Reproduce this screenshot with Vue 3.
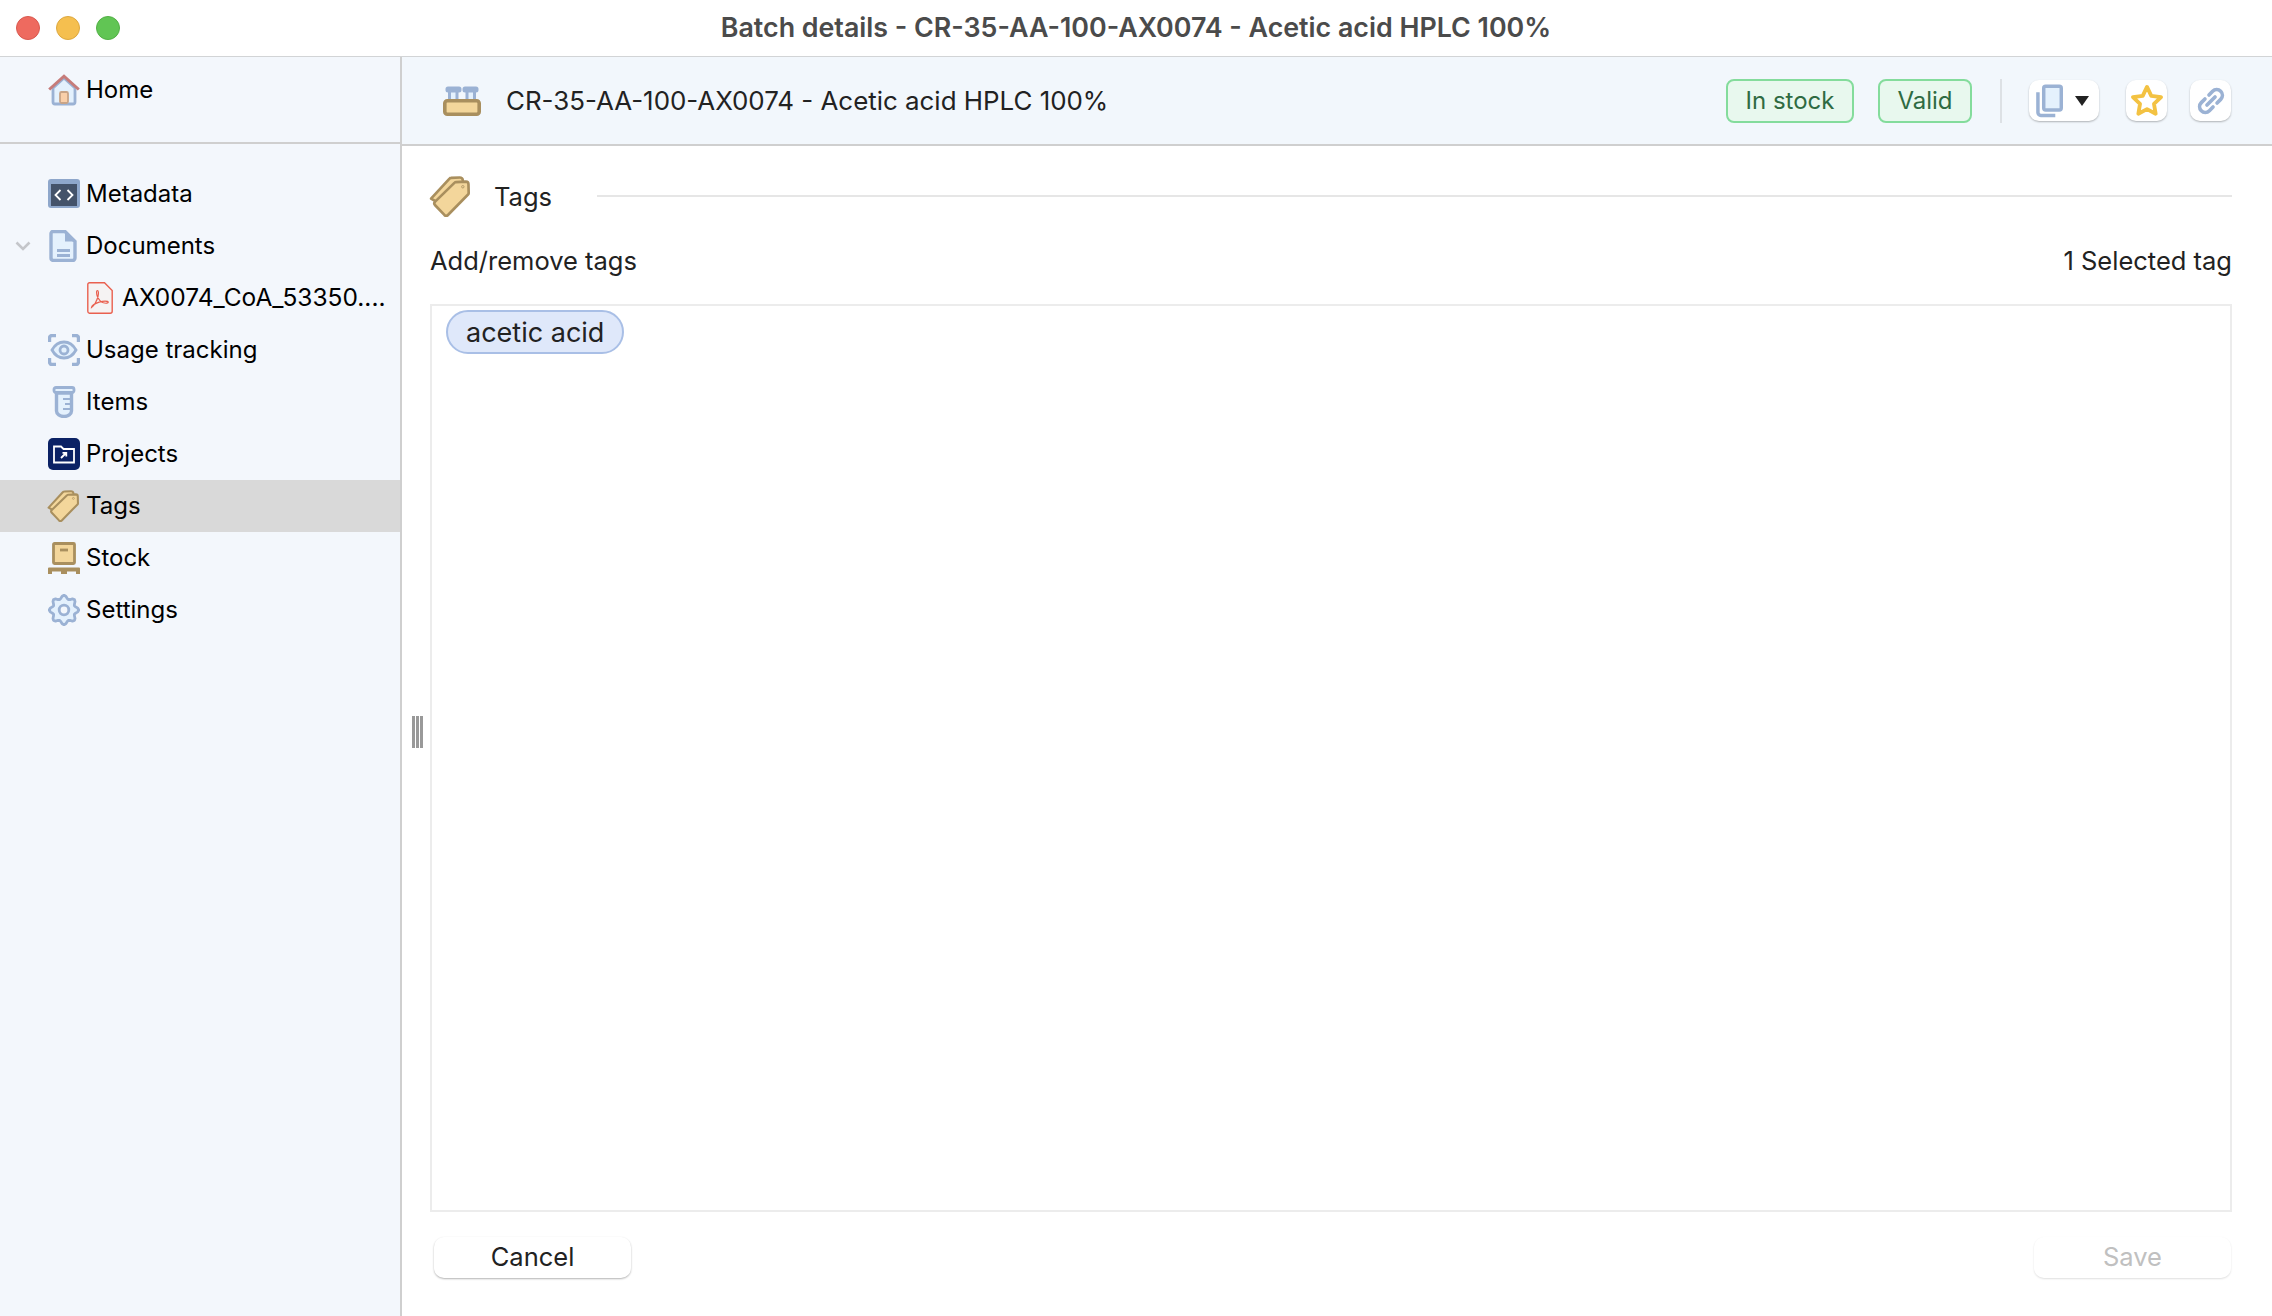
<script setup>
const navItems = [
  { id: 'metadata', label: 'Metadata' },
  { id: 'documents', label: 'Documents', expanded: true },
  { id: 'pdf', label: 'AX0074_CoA_53350....', child: true },
  { id: 'usage', label: 'Usage tracking' },
  { id: 'items', label: 'Items' },
  { id: 'projects', label: 'Projects' },
  { id: 'tags', label: 'Tags', active: true },
  { id: 'stock', label: 'Stock' },
  { id: 'settings', label: 'Settings' }
]

const selectedTags = ['acetic acid']

// gear outline with 8 teeth, the curves get smoothed by the round stroke join
const gearPath = (() => {
  const pts = []
  for (let i = 0; i < 48; i++) {
    const a = (i / 48) * Math.PI * 2
    const r = 13 + 1.8 * Math.cos(a * 8)
    pts.push(`${(16 + r * Math.sin(a)).toFixed(2)} ${(16 - r * Math.cos(a)).toFixed(2)}`)
  }
  return 'M' + pts.join('L') + 'Z'
})()
</script>

<template>
  <div class="window">
    <header class="titlebar">
      <div class="lights">
        <span class="light red"></span>
        <span class="light yellow"></span>
        <span class="light green"></span>
      </div>
      <h1>Batch details - CR-35-AA-100-AX0074 - Acetic acid HPLC 100%</h1>
    </header>

    <div class="body">
      <aside class="sidebar">
        <div class="side-top">
          <div class="row">
            <svg class="icon" viewBox="0 0 32 32">
              <path d="M5 14v14a2 2 0 0 0 2 2h18a2 2 0 0 0 2-2V14L16 4z" fill="#e4f1fd" stroke="#9bb2d4" stroke-width="2.800" />
              <rect x="12" y="18" width="8" height="11" rx="1.500" fill="#f9cfa9" stroke="#c8a487" stroke-width="1.800" />
              <path d="M1.200 15.500 16 2.200l14.800 13.300" fill="none" stroke="#c67c7a" stroke-width="3" />
            </svg>
            <span>Home</span>
          </div>
        </div>

        <nav class="side-list">
          <div v-for="item in navItems" :key="item.id" class="row" :class="{ active: item.active, child: item.child }">
            <svg v-if="item.expanded" class="chevron" viewBox="0 0 16 10">
              <path d="M1.500 1.500 8 8l6.500-6.500" fill="none" stroke="#c4c6ca" stroke-width="2.600" />
            </svg>

            <svg v-if="item.id === 'metadata'" class="icon" viewBox="0 0 32 32">
              <rect y="1" width="32" height="29" rx="3" fill="#8ea7cb" />
              <rect x="3" y="6" width="26" height="22" fill="#44536a" />
              <path d="M12.500 12 7.500 17l5 5M19.500 12l5 5-5 5" fill="none" stroke="#fff" stroke-width="1.800" />
            </svg>
            <svg v-else-if="item.id === 'documents'" class="icon" viewBox="0 0 32 32">
              <path d="M5 1.500h12l10 10V28a2.500 2.500 0 0 1-2.500 2.500h-19.500A2.500 2.500 0 0 1 3 28V3.500a2 2 0 0 1 2-2z" fill="#e4f1fd" stroke="#9bb2d4" stroke-width="3.400" />
              <path d="M17 1.500 27 11.500H17z" fill="#9bb2d4" />
              <path d="M9 20.500h13M9 25.500h13" stroke="#9bb2d4" stroke-width="3" />
            </svg>
            <svg v-else-if="item.id === 'pdf'" class="icon pdf" viewBox="0 0 26 32">
              <path d="M2.500.8h15l7.700 7.700v20.700a2 2 0 0 1-2 2H2.500a2 2 0 0 1-1.700-2V2.500A1.700 1.700 0 0 1 2.500.800z" fill="#f5f3f3" stroke="#e9604f" stroke-width="1.400" />
              <path d="M4.500 25.500c2.500-1.500 5.500-7 6.500-11 .8-3 .5-6-.6-6-1.200 0-1 3.500 0 6 1.500 3.500 3.600 5.500 6 6.300 2.600.8 5 .4 4.800-.7-.2-1.300-5-1.300-9 0-3.500 1.200-7.500 3.500-7.700 5.400z" fill="none" stroke="#e9604f" stroke-width="1.200" />
            </svg>
            <svg v-else-if="item.id === 'usage'" class="icon" viewBox="0 0 32 32">
              <path d="M1.500 8V4a2.500 2.500 0 0 1 2.500-2.500h4M24 1.500h4A2.500 2.500 0 0 1 30.500 4v4M30.500 24v4a2.500 2.500 0 0 1-2.500 2.500h-4M8 30.500H4A2.500 2.500 0 0 1 1.500 28v-4" fill="none" stroke="#9bb2d4" stroke-width="3.400" />
              <path d="M4 16c3-5.500 7-8 12-8s9 2.500 12 8c-3 5.500-7 8-12 8s-9-2.500-12-8z" fill="#e4f1fd" stroke="#9bb2d4" stroke-width="2.800" />
              <circle cx="16" cy="16" r="4" fill="#e4f1fd" stroke="#9bb2d4" stroke-width="2.800" />
            </svg>
            <svg v-else-if="item.id === 'items'" class="icon" viewBox="0 0 32 32">
              <rect x="6" y="1.500" width="20" height="5" rx="2" fill="#e4f1fd" stroke="#9bb2d4" stroke-width="2.800" />
              <path d="M8.500 7v18a7.500 5.500 0 0 0 15 0V7z" fill="#e4f1fd" stroke="#9bb2d4" stroke-width="3.400" />
              <path d="M15 13h7M17 18h5M15 23h7" stroke="#9bb2d4" stroke-width="2.200" />
            </svg>
            <svg v-else-if="item.id === 'projects'" class="icon" viewBox="0 0 32 32">
              <rect width="32" height="32" rx="5" fill="#0b2265" />
              <path d="M6 8.500h7l2.500 2.500H26v13.500H6z" fill="none" stroke="#fff" stroke-width="1.800" />
              <path d="M13 20l5-5M14.500 14.800h3.800v3.800" fill="none" stroke="#fff" stroke-width="1.800" />
            </svg>
            <svg v-else-if="item.id === 'tags'" class="icon tag-icon" viewBox="0 0 40 40">
              <use href="#tag-pair" />
            </svg>
            <svg v-else-if="item.id === 'stock'" class="icon" viewBox="0 0 32 32">
              <rect x="5.500" y="1.500" width="21" height="20" rx="1" fill="#f3d69b" stroke="#a98f5e" stroke-width="2.800" />
              <path d="M12 8h8" stroke="#a98f5e" stroke-width="2.800" />
              <path d="M1 25.500h30a1 1 0 0 1 1 1V32h-4v-2.500h-9V32h-6v-2.500H4V32H0v-5.500a1 1 0 0 1 1-1z" fill="#a98f5e" />
            </svg>
            <svg v-else-if="item.id === 'settings'" class="icon" viewBox="0 0 32 32">
              <path :d="gearPath" fill="#e4f1fd" stroke="#9bb2d4" stroke-width="2.800" stroke-linejoin="round" />
              <circle cx="16" cy="16" r="4.800" fill="#f3f7fc" stroke="#9bb2d4" stroke-width="2.800" />
            </svg>

            <span :class="{ 'pdf-label': item.child }">{{ item.label }}</span>
          </div>
        </nav>
      </aside>

      <main class="content">
        <div class="detail-head">
          <svg class="batch-icon" viewBox="0 0 38 30">
            <path d="M8 6h5v9H8zM25 6h5v9h-5z" fill="#e4f1fd" />
            <path d="M6.500 5v10M14 5v10M24 5v10M31.500 5v10" stroke="#9bb2d4" stroke-width="3" />
            <rect x="3.500" y="1.500" width="14" height="4" rx="1.500" fill="#9bb2d4" stroke="#9bb2d4" stroke-width="2" />
            <rect x="20.500" y="1.500" width="14" height="4" rx="1.500" fill="#9bb2d4" stroke="#9bb2d4" stroke-width="2" />
            <rect x="1.800" y="14.800" width="34.400" height="13.400" rx="2.500" fill="#f3d69b" stroke="#a98f5e" stroke-width="3.600" />
          </svg>
          <span class="detail-title">CR-35-AA-100-AX0074 - Acetic acid HPLC 100%</span>
          <span class="badge stock-badge">In stock</span>
          <span class="badge valid-badge">Valid</span>
          <span class="head-sep"></span>
          <button class="icon-btn copy-btn">
            <svg class="copy-icon" viewBox="0 0 28 34">
              <path d="M2 8v21a3 3 0 0 0 3 3h15" fill="none" stroke="#9bb2d4" stroke-width="3.600" />
              <rect x="8" y="1.800" width="18.200" height="24.500" rx="2" fill="#e4f1fd" stroke="#9bb2d4" stroke-width="3.600" />
            </svg>
            <span class="caret"></span>
          </button>
          <button class="icon-btn square">
            <svg class="star-icon" viewBox="0 0 32 32">
              <path d="M16 3.500l3.800 7.900 8.700 1.200-6.300 6 1.500 8.700-7.700-4.100-7.700 4.100 1.500-8.700-6.300-6 8.700-1.200z" fill="#fff" stroke="#f3c242" stroke-width="3.400" stroke-linejoin="round" />
            </svg>
          </button>
          <button class="icon-btn square">
            <svg class="link-icon" viewBox="0 0 28 28">
              <g transform="rotate(-45 14 14)" fill="none" stroke="#9bb2d4" stroke-width="3.200" stroke-linecap="round">
                <path d="M11.500 9H7a5 5 0 0 0 0 10h4.500" />
                <path d="M16.500 9H21a5 5 0 0 1 0 10h-4.500" />
                <path d="M9 14h10" />
              </g>
            </svg>
          </button>
        </div>

        <section class="tags-panel">
          <div class="section-title">
            <svg class="section-icon" viewBox="0 0 40 40">
              <use href="#tag-pair" />
            </svg>
            <span>Tags</span>
            <span class="section-line"></span>
          </div>

          <div class="tags-bar">
            <span>Add/remove tags</span>
            <span>{{ selectedTags.length }} Selected tag</span>
          </div>

          <div class="tags-box">
            <span v-for="tag in selectedTags" :key="tag" class="chip">{{ tag }}</span>
          </div>

          <div class="actions">
            <button class="btn">Cancel</button>
            <button class="btn" disabled>Save</button>
          </div>
        </section>

        <span class="grip"><i></i><i></i><i></i></span>
      </main>
    </div>

    <svg class="defs" width="0" height="0">
      <defs>
        <g id="tag-pair" stroke="#a98f5e" stroke-width="2.600" stroke-linejoin="round">
          <path d="M2 22 20 2.500a2 2 0 0 1 1.500-.700L30 1.500a3 3 0 0 1 3 2.500l.5 5L16 30z" fill="#f3d69b" />
          <path d="M6 28.500a2.500 2.500 0 0 1 0-3.500L25 6.500a2 2 0 0 1 1.500-.6l9.500-.4a2.500 2.500 0 0 1 2.500 2.500l.2 8.500a2 2 0 0 1-.6 1.500L18.500 38a2.500 2.500 0 0 1-3.500 0z" fill="#f3d69b" />
          <circle cx="33" cy="10.500" r="1.200" fill="none" stroke-width="0.800" />
        </g>
      </defs>
    </svg>
  </div>
</template>

<style>
html, body { margin: 0; background: #fff; }
</style>

<style scoped>
.window {
  width: 2272px;
  height: 1316px;
  display: flex;
  flex-direction: column;
  overflow: hidden;
  font-family: Inter, "Liberation Sans", sans-serif;
  font-size: 24px;
  color: #000;
  background: #fff;
}

.titlebar {
  height: 56px;
  flex: none;
  display: flex;
  align-items: center;
  justify-content: center;
  position: relative;
  border-bottom: 1px solid #d2d4d6;
  background: #fff;
}
.titlebar h1 { margin: 0 0 2px; font-size: 26.8px; font-weight: 600; color: #4b4b4b; }
.lights { position: absolute; left: 16px; top: 16px; display: flex; gap: 16px; }
.light { width: 24px; height: 24px; border-radius: 50%; box-sizing: border-box; border: 1px solid; }
.red { background: #ee6a5f; border-color: #d9594f; }
.yellow { background: #f5bf4f; border-color: #dda83f; }
.green { background: #61c554; border-color: #52b045; }

.body { flex: 1; display: flex; min-height: 0; }

.sidebar {
  width: 402px;
  flex: none;
  box-sizing: border-box;
  background: #f3f7fc;
  border-right: 2px solid #cfcfcf;
}
.side-top {
  height: 87px;
  box-sizing: border-box;
  padding-top: 7px;
  border-bottom: 2px solid #cfcfcf;
}
.side-list { padding-top: 24px; }

.row {
  height: 52px;
  display: flex;
  align-items: center;
  position: relative;
  padding-left: 48px;
}
.row span { margin-bottom: 2px; }
.row.active { background: #d9d9d9; }
.row.child { padding-left: 87px; }
.pdf-label { font-size: 24.5px; }
.icon { width: 32px; height: 32px; flex: none; margin-right: 6px; }
.icon.pdf { width: 26px; margin-right: 9px; }
.tag-icon { margin-left: -1px; margin-right: 7px; }
.chevron { position: absolute; left: 15px; top: 21px; width: 16px; height: 10px; }

.content { flex: 1; min-width: 0; display: flex; flex-direction: column; position: relative; }

.detail-head {
  height: 89px;
  flex: none;
  box-sizing: border-box;
  display: flex;
  align-items: center;
  padding: 0 41px;
  background: #f2f7fc;
  border-bottom: 2px solid #cfcfcf;
}
.batch-icon { width: 38px; height: 30px; flex: none; margin-right: 25px; }
.detail-title { flex: 1; color: #222; font-size: 25.9px; }
.badge {
  height: 44px;
  box-sizing: border-box;
  display: flex;
  align-items: center;
  justify-content: center;
  border: 2px solid #84dc9c;
  border-radius: 8px;
  background: #e8f8ee;
  color: #2f6b42;
}
.stock-badge { width: 128px; }
.valid-badge { width: 94px; margin-left: 24px; }
.head-sep { width: 2px; height: 44px; background: #dde1e5; margin: 0 27px 0 28px; }

.icon-btn {
  height: 41px;
  padding: 0;
  display: flex;
  align-items: center;
  border: none;
  border-radius: 10px;
  background: #fff;
  box-shadow: 0 1px 2px rgba(0, 0, 0, 0.28);
}
.icon-btn.square { width: 41px; justify-content: center; margin-left: 23px; }
.copy-btn { width: 70px; padding-left: 7px; box-sizing: border-box; margin-right: 4px; }
.copy-icon { width: 27px; height: 34px; }
.caret {
  width: 0;
  height: 0;
  margin-left: 12px;
  border-left: 7px solid transparent;
  border-right: 7px solid transparent;
  border-top: 10px solid #222;
}
.star-icon { width: 36px; height: 36px; }
.link-icon { width: 32px; height: 32px; }

.tags-panel {
  flex: 1;
  min-height: 0;
  display: flex;
  flex-direction: column;
  padding: 0 40px 38px 28px;
  color: #222;
  font-size: 25.5px;
}
.section-title { height: 70px; display: flex; align-items: center; margin-top: 15px; flex: none; }
.section-icon { width: 41px; height: 41px; flex: none; margin-left: -1px; margin-right: 24px; }
.section-line { flex: 1; height: 2px; background: #e6e6e6; margin-left: 45px; }
.tags-bar { display: flex; justify-content: space-between; align-items: center; height: 60px; flex: none; margin-top: -1px; margin-bottom: 14px; }

.tags-box {
  flex: 1;
  min-height: 0;
  box-sizing: border-box;
  border: 2px solid #ececec;
  padding: 4px 14px;
}
.chip {
  display: inline-flex;
  align-items: center;
  height: 44px;
  box-sizing: border-box;
  padding: 0 18px;
  border: 2px solid #a9bfe6;
  border-radius: 22px;
  background: #dfe8fa;
  font-size: 27px;
}

.actions { display: flex; justify-content: space-between; padding: 25px 1px 0 4px; flex: none; }
.btn {
  width: 197px;
  height: 41px;
  border: none;
  border-radius: 10px;
  background: #fff;
  box-shadow: 0 1px 2px rgba(0, 0, 0, 0.3);
  font: inherit;
  color: #222;
  padding: 0 0 2px;
}
.btn:disabled { color: #c0c0c0; box-shadow: 0 1px 2px rgba(0, 0, 0, 0.13); }

.grip { position: absolute; left: 10px; top: 659px; display: flex; gap: 1px; }
.grip i { width: 3px; height: 32px; background: #999; }

.defs { position: absolute; }
</style>
